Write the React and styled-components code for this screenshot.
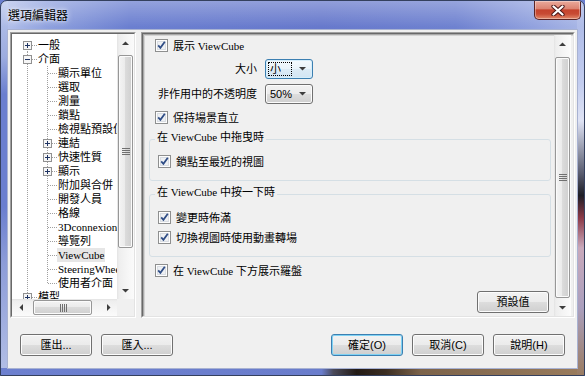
import styled, { createGlobalStyle } from "styled-components";

const GlobalStyle = createGlobalStyle`
  html, body {
    margin:0;
    padding:0;
  }
  body {
    width:585px;
    height:376px;
    overflow:hidden;
    background:#6a7ecf;
    color:#000;
    font-family:"Liberation Serif","Noto Sans CJK TC",serif;
    font-size:11px;
  }
`

const SERIF = `"Liberation Serif","Noto Sans CJK TC",serif`
const SANS = `"Liberation Sans","Noto Sans CJK TC",sans-serif`

const Window = styled.div`
  width:585px;
  height:376px;
  box-sizing:border-box;
  display:flex;
  flex-direction:column;
  padding:0 6px 6px;
  border:1px solid #34405e;
  border-radius:7px 7px 0 0;
  overflow:hidden;
  background:
    linear-gradient(to bottom, rgba(255,255,255,0.28), rgba(255,255,255,0) 26px),
    linear-gradient(to bottom, #a8b6e6 0%, #c3cdef 22%, #dfe3f4 32%, #5a5d70 46%, #1e1e26 52%, #8c3a48 58%, #c9a9bb 66%, #ab9fbd 82%, #9a7c62 100%) right top / 7px 100% no-repeat,
    linear-gradient(to right, #6d80cf 0%, #6a7dcc 55%, #4a4a5a 57%, #221a15 61%, #3b2d22 66%, #7c634a 72%, #9a7c5d 100%) left bottom / 100% 7px no-repeat,
    linear-gradient(to bottom, #b9c6ec 0%, #9cacdf 15%, #6a7ecf 25%, #6a7ecf 55%, #8c9cd8 70%, #b3bfe6 100%) left top / 7px 100% no-repeat,
    linear-gradient(to right, #b8c5ec 0%, #8fa1de 8%, #6b7fd0 22%, #6779cc 55%, #6f82d0 78%, #96a6e0 93%, #a9b7e6 100%);
`

const TitleBar = styled.div`
  flex:0 0 28px;
  display:flex;
  justify-content:space-between;
  align-items:flex-start;
`

const Title = styled.div`
  padding:6px 0 0 1px;
  font:12px/16px "Noto Sans CJK TC",sans-serif;
  color:#000;
  text-shadow:0 0 6px rgba(255,255,255,0.9), 0 0 3px rgba(255,255,255,0.7);
`

const CloseButton = styled.div`
  width:47px;
  height:19px;
  margin-right:-3px;
  box-sizing:border-box;
  display:flex;
  align-items:center;
  justify-content:center;
  border:1px solid #5a2424;
  border-top:none;
  border-radius:0 0 5px 5px;
  background:linear-gradient(#eaaa9c 0%, #dc8472 42%, #c5432d 50%, #c84b34 72%, #e1896b 100%);
  box-shadow:inset 0 0 0 1px rgba(255,255,255,0.35);
`

const Client = styled.div`
  flex:1;
  display:flex;
  flex-direction:column;
  padding:2px 2px 0;
  border:1px solid #a8b2d2;
  background:#f0f0f0;
  min-height:0;
`

const Body = styled.div`
  flex:0 0 286px;
  display:flex;
  gap:5px;
  min-height:0;
`

const Sunken = styled.div`
  box-sizing:border-box;
  border:1px solid;
  border-color:#a0a0a0 #ffffff #ffffff #a0a0a0;
  width:${p => p.$width ? `${p.$width}px` : "auto"};
  flex:${p => p.$width ? "0 0 auto" : "1"};
  display:flex;
  min-width:0;
`

const TreeFrame = styled.div`
  flex:1;
  display:grid;
  grid-template-columns:minmax(0, 1fr) 17px;
  grid-template-rows:minmax(0, 1fr) 17px;
  border:1px solid;
  border-color:#696969 #e3e3e3 #e3e3e3 #696969;
  background:#fff;
  min-width:0;
`

const TreeView = styled.div`
  overflow:hidden;
  padding:4px 0 0 5px;
  min-width:0;
`

const TreeRow = styled.div`
  display:flex;
  align-items:center;
  height:14px;
  white-space:nowrap;

  & > * {
    flex-shrink:0;
  }
`

const TreeLabel = styled.span`
  padding:0 1px;
  font:11px/14px ${SERIF};
  background:${p => p.$selected ? "#e6e6e6" : "transparent"};
`

const Corner = styled.div`
  background:#f0f0f0;
`

const MainFrame = styled.div`
  flex:1;
  display:flex;
  border:1px solid;
  border-color:#696969 #e3e3e3 #e3e3e3 #696969;
  background:#f0f0f0;
  box-shadow:inset 1px 1px 0 #a9a9a9, inset 2px 2px 0 #d4d4d4;
  min-width:0;
`

const Settings = styled.div`
  flex:1;
  display:flex;
  flex-direction:column;
  padding:3px 3px 0 6px;
  min-width:0;
`

const CheckRow = styled.label`
  display:flex;
  align-items:center;
  gap:5px;
  height:17px;
  margin-top:${p => p.$top || 0}px;
  padding-left:${p => p.$indent}px;
  font:11px/14px ${SERIF};
  white-space:nowrap;
`

const FieldRow = styled.div`
  display:flex;
  align-items:center;
  gap:8px;
  height:20px;
  margin-top:${p => p.$top}px;
`

const FieldLabel = styled.span`
  width:108px;
  text-align:right;
  font:11px/14px ${SERIF};
  white-space:nowrap;
`

const Combo = styled.div`
  width:48px;
  height:20px;
  box-sizing:border-box;
  display:flex;
  align-items:center;
  justify-content:space-between;
  padding:0 6px 0 2px;
  border:1px solid ${p => p.$focused ? "#3c7fb1" : "#707070"};
  border-radius:3px;
  background:${p => p.$focused
    ? "linear-gradient(#f4f9fd 0%, #e9f3fa 50%, #dcebf6 51%, #d2e5f3 100%)"
    : "linear-gradient(#f2f2f2 0%, #ebebeb 50%, #dddddd 51%, #cfcfcf 100%)"};
  box-shadow:inset 0 0 0 1px ${p => p.$focused ? "#d6eefb" : "#fcfcfc"};
`

const ComboValue = styled.span`
  box-sizing:border-box;
  width:24px;
  height:14px;
  padding-left:1px;
  border:1px dotted ${p => p.$focused ? "#000" : "transparent"};
  font:11px/12px ${SANS};
`

const Group = styled.fieldset`
  margin:${p => p.$top}px 0 0;
  padding:${p => p.$pad}px 0 10px;
  border:1px solid #d5dfe5;
  border-radius:3px;
  min-width:0;
`

const Legend = styled.legend`
  margin-left:5px;
  padding:0 2px 4px;
  font:11px/14px ${SERIF};
`

const Button = styled.button`
  width:72px;
  height:22px;
  box-sizing:border-box;
  padding:0;
  border:1px solid ${p => p.$primary ? "#3c7fb1" : "#707070"};
  border-radius:3px;
  background:linear-gradient(#f2f2f2 0%, #ebebeb 50%, #dddddd 51%, #cfcfcf 100%);
  box-shadow:inset 0 0 0 1px ${p => p.$primary ? "#7fd2f4" : "#fcfcfc"};
  color:#000;
  font:11px/18px ${SANS};
  align-self:${p => p.$end ? "flex-end" : "auto"};
  margin-top:${p => p.$top || 0}px;
  margin-right:${p => p.$right || 0}px;
`

const Footer = styled.div`
  flex:1;
  display:flex;
  justify-content:space-between;
  align-items:flex-start;
  padding:16px 10px 0;
`

const ButtonGroup = styled.div`
  display:flex;
  gap:9px;
`

const Scroll = styled.div`
  display:flex;
  flex-direction:${p => p.$horizontal ? "row" : "column"};
  ${p => p.$horizontal ? "height:17px;" : "width:17px;"}
  margin:${p => p.$margin || "0"};
  background:${p => p.$horizontal
    ? "linear-gradient(to bottom, #e3e3e3 0, #eeeeee 2px, #f4f4f4 50%, #fbfbfb 100%)"
    : "linear-gradient(to right, #e3e3e3 0, #eeeeee 2px, #f4f4f4 50%, #fbfbfb 100%)"};
  min-width:0;
  min-height:0;
`

const ScrollArrow = styled.div`
  flex:0 0 17px;
  display:flex;
  align-items:center;
  justify-content:center;
`

const ScrollTrack = styled.div`
  flex:1;
  display:flex;
  flex-direction:${p => p.$horizontal ? "row" : "column"};
  ${p => p.$horizontal ? `padding-left:${p.$offset}px;` : `padding-top:${p.$offset}px;`}
  min-width:0;
  min-height:0;
`

const Thumb = styled.div`
  box-sizing:border-box;
  flex-shrink:0;
  ${p => p.$horizontal
    ? `width:${p.$size}px; margin:1px 0;`
    : `height:${p.$size}px; margin:0 1px;`}
  display:flex;
  align-items:center;
  justify-content:center;
  border:1px solid #979797;
  border-radius:2px;
  background:${p => p.$horizontal
    ? "linear-gradient(to bottom, #f4f4f4 0%, #ebebeb 45%, #dbdbdb 50%, #cfcfcf 100%)"
    : "linear-gradient(to right, #f4f4f4 0%, #ebebeb 45%, #dbdbdb 50%, #cfcfcf 100%)"};
  box-shadow:inset 0 0 0 1px #fbfbfb;
`

const Arrow = ({ dir }) => {
  const pts = {
    up: "0,4 7,4 3.5,0.5",
    down: "0,0 7,0 3.5,3.5",
    left: "4,0 4,7 0.5,3.5",
    right: "0,0 0,7 3.5,3.5",
  }[dir]
  const vertical = dir === "up" || dir === "down"
  return (
    <svg width={vertical ? 7 : 4} height={vertical ? 4 : 7}>
      <polygon points={pts} fill="#3d3d3d" />
    </svg>
  )
}

const Grip = ({ horizontal }) => (
  <svg width="8" height="8" style={horizontal ? { transform: "rotate(90deg)" } : undefined}>
    {[0, 2, 4, 6].map(y => (
      <line key={y} x1="0" y1={y + 0.5} x2="8" y2={y + 0.5} stroke="#707070" shapeRendering="crispEdges" />
    ))}
  </svg>
)

const ScrollBar = ({ horizontal, offset, size, margin }) => (
  <Scroll $horizontal={horizontal} $margin={margin}>
    <ScrollArrow><Arrow dir={horizontal ? "left" : "up"} /></ScrollArrow>
    <ScrollTrack $horizontal={horizontal} $offset={offset}>
      <Thumb $horizontal={horizontal} $size={size}><Grip horizontal={horizontal} /></Thumb>
    </ScrollTrack>
    <ScrollArrow><Arrow dir={horizontal ? "right" : "down"} /></ScrollArrow>
  </Scroll>
)

const CheckBox = () => (
  <svg width="13" height="13" viewBox="0 0 13 13" shapeRendering="crispEdges" style={{ flexShrink: 0 }}>
    <rect x="0.5" y="0.5" width="12" height="12" fill="#fdfdfd" stroke="#8e8f8f" />
    <rect x="2" y="2" width="9" height="9" fill="#d9dde3" />
    <rect x="3" y="3" width="7" height="7" fill="#eef0f3" />
    <path d="M3.2 6.4 L5.4 8.8 L9.8 2.8" fill="none" stroke="#2f4d86" strokeWidth="1.8" shapeRendering="auto" />
  </svg>
)

const CloseGlyph = () => (
  <svg width="14" height="11" viewBox="0 0 14 11">
    <path d="M2.5 1.5 L11.5 9.5 M11.5 1.5 L2.5 9.5" stroke="#4a1616" strokeWidth="4.2" strokeLinecap="round" />
    <path d="M2.5 1.5 L11.5 9.5 M11.5 1.5 L2.5 9.5" stroke="#ffffff" strokeWidth="2.3" strokeLinecap="round" />
  </svg>
)

const Guide = ({ on }) => (
  <svg width="20" height="14">
    {on && <line x1="10.5" y1="0" x2="10.5" y2="14" stroke="#a0a0a0" strokeDasharray="1 1" />}
  </svg>
)

const Branch = ({ first, last, toggle }) => (
  <svg width="20" height="14" shapeRendering="crispEdges">
    <g stroke="#a0a0a0" strokeDasharray="1 1">
      <line x1="10.5" y1={first ? 7 : 0} x2="10.5" y2={last ? 8 : 14} />
      <line x1="11" y1="7.5" x2="20" y2="7.5" />
    </g>
    {toggle && (
      <g>
        <rect x="6.5" y="3.5" width="8" height="8" fill="#f6f6f6" stroke="#919191" />
        <line x1="8" y1="7.5" x2="13" y2="7.5" stroke="#1f3463" />
        {toggle === "plus" && <line x1="10.5" y1="5" x2="10.5" y2="10" stroke="#1f3463" />}
      </g>
    )}
  </svg>
)

const tree = [
  { label: "一般", toggle: "plus" },
  {
    label: "介面",
    toggle: "minus",
    children: [
      { label: "顯示單位" },
      { label: "選取" },
      { label: "測量" },
      { label: "鎖點" },
      { label: "檢視點預設位置" },
      { label: "連結", toggle: "plus" },
      { label: "快速性質", toggle: "plus" },
      { label: "顯示", toggle: "plus" },
      { label: "附加與合併" },
      { label: "開發人員" },
      { label: "格線" },
      { label: "3Dconnexion" },
      { label: "導覽列" },
      { label: "ViewCube", selected: true },
      { label: "SteeringWheels" },
      { label: "使用者介面" },
    ],
  },
  { label: "模型", toggle: "plus" },
]

function flatten(nodes, level = 0, guides = [], out = []) {
  nodes.forEach((n, i) => {
    const last = i === nodes.length - 1
    out.push({ ...n, level, guides, last, first: level === 0 && i === 0 })
    if (n.children) flatten(n.children, level + 1, [...guides, !last], out)
  })
  return out
}

const rows = flatten(tree)

export default function App() {
  return (
    <>
      <GlobalStyle />
      <Window>
        <TitleBar>
          <Title>選項編輯器</Title>
          <CloseButton><CloseGlyph /></CloseButton>
        </TitleBar>
        <Client>
          <Body>
            <Sunken $width={126}>
              <TreeFrame>
                <TreeView>
                  {rows.map(r => (
                    <TreeRow key={r.label}>
                      {r.guides.map((g, i) => <Guide key={i} on={g} />)}
                      <Branch first={r.first} last={r.last} toggle={r.toggle} />
                      <TreeLabel $selected={r.selected}>{r.label}</TreeLabel>
                    </TreeRow>
                  ))}
                </TreeView>
                <ScrollBar offset={4} size={193} />
                <ScrollBar horizontal offset={4} size={59} />
                <Corner />
              </TreeFrame>
            </Sunken>
            <Sunken>
              <MainFrame>
                <Settings>
                  <CheckRow $top={0} $indent={6}><CheckBox />展示 ViewCube</CheckRow>
                  <FieldRow $top={5}>
                    <FieldLabel>大小</FieldLabel>
                    <Combo $focused><ComboValue $focused>小</ComboValue><Arrow dir="down" /></Combo>
                  </FieldRow>
                  <FieldRow $top={5}>
                    <FieldLabel>非作用中的不透明度</FieldLabel>
                    <Combo><ComboValue>50%</ComboValue><Arrow dir="down" /></Combo>
                  </FieldRow>
                  <CheckRow $top={5} $indent={6}><CheckBox />保持場景直立</CheckRow>
                  <Group $top={4} $pad={5}>
                    <Legend>在 ViewCube 中拖曳時</Legend>
                    <CheckRow $indent={8}><CheckBox />鎖點至最近的視圖</CheckRow>
                  </Group>
                  <Group $top={4} $pad={6}>
                    <Legend>在 ViewCube 中按一下時</Legend>
                    <CheckRow $indent={8}><CheckBox />變更時佈滿</CheckRow>
                    <CheckRow $top={3} $indent={8}><CheckBox />切換視圖時使用動畫轉場</CheckRow>
                  </Group>
                  <CheckRow $top={5} $indent={6}><CheckBox />在 ViewCube 下方展示羅盤</CheckRow>
                  <Button $end $top={12} $right={2}>預設值</Button>
                </Settings>
                <ScrollBar offset={5} size={241} margin="1px 2px 0 0" />
              </MainFrame>
            </Sunken>
          </Body>
          <Footer>
            <ButtonGroup>
              <Button>匯出...</Button>
              <Button>匯入...</Button>
            </ButtonGroup>
            <ButtonGroup>
              <Button $primary>確定(O)</Button>
              <Button>取消(C)</Button>
              <Button>說明(H)</Button>
            </ButtonGroup>
          </Footer>
        </Client>
      </Window>
    </>
  )
}
